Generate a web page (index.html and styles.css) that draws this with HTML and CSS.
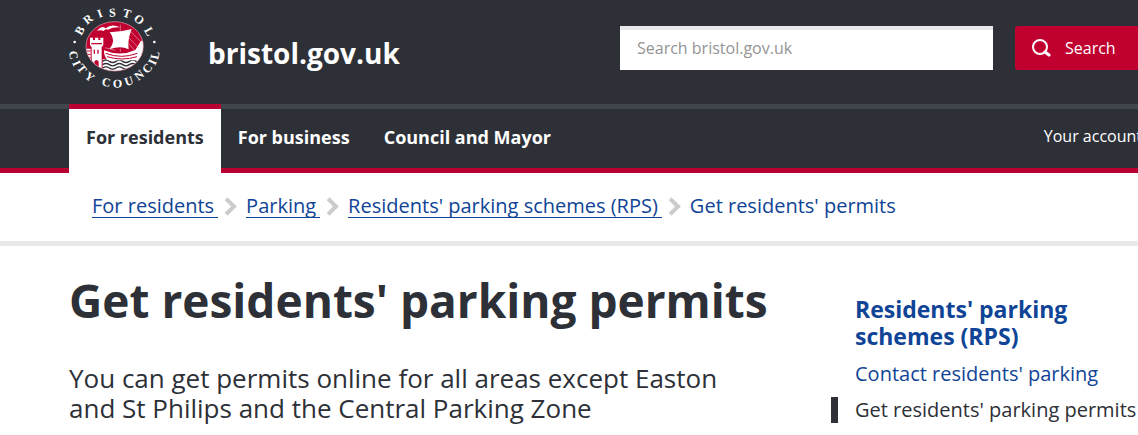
FILE: index.html
```html
<!DOCTYPE html>
<html lang="en">
<head>
  <meta charset="UTF-8">
  <meta name="viewport" content="width=device-width, initial-scale=1.0">
  <title>Get residents' parking permits - bristol.gov.uk</title>
  <link rel="stylesheet" href="styles.css">
</head>
<body>
  <header class="header">
    <div class="container header-inner">
      <a class="brand" href="#">
        <svg class="logo" viewBox="0 0 330 285" role="img" aria-label="Bristol City Council">
          <defs>
            <clipPath id="disc"><ellipse cx="164" cy="139" rx="86" ry="74"/></clipPath>
          </defs>
          <g clip-path="url(#disc)">
            <rect x="70" y="60" width="190" height="160" fill="#c0002f"/>
            <!-- sea -->
            <path d="M128 178H260V220H128z" fill="#fff"/>
            <g fill="none" stroke="#2d3037" stroke-width="4">
              <path d="M128 184q10-7 20 0t20 0 20 0 20 0 20 0 20 0"/>
              <path d="M128 194q10-7 20 0t20 0 20 0 20 0 20 0 20 0"/>
              <path d="M128 204q10-7 20 0t20 0 20 0 20 0 20 0 20 0"/>
            </g>
            <!-- castle -->
            <path d="M70 146H92V210H70z" fill="#fff"/>
            <path d="M70 153h22M70 163h22M70 173h22M70 183h22M70 193h22" stroke="#c0002f" stroke-width="3"/>
            <path d="M90 113h9v7h6v-7h10v7h6v-7h9v22l-5 7v67H95v-67l-5-7z" fill="#fff"/>
            <path d="M94 131h32M103 149v12M114 149v12" stroke="#c0002f" stroke-width="4"/>
            <path d="M103 209v-24q6-10 13 0v24z" fill="#c0002f"/>
            <!-- ship -->
            <path d="M149 97q34-1 66-10-13 34-9 61-24-12-58 0 22-27 1-51z" fill="#fff"/>
            <path d="M132 151q48 20 94-1l17-28h7v46l-14 13H143q-12-13-11-30z" fill="#fff"/>
            <path d="M137 160q47 18 95 0M141 170q46 14 90 0" fill="none" stroke="#c0002f" stroke-width="3"/>
            <path d="M181 74v20M181 146v10M208 90l33 34M205 112l31 32M203 128l22 24M166 151l-31-8" fill="none" stroke="#e6a3b2" stroke-width="2"/>
            <path d="M111 92q13-17 26-7 18-16 43-3-22-1-36 7-8-4-13 4-7-4-20-1z" fill="#fff"/>
          </g>
          <ellipse cx="164" cy="139" rx="86" ry="74" fill="none" stroke="#e6a3b2" stroke-width="2"/>
          <circle cx="44" cy="126" r="4" fill="#fff"/>
          <circle cx="283" cy="126" r="4" fill="#fff"/>
          <text class="logo-text" x="64 81 117 148 186 219 251" y="108 75 54 50 49 59 90" rotate="-60 -38 -20 -3 16 38 60">BRISTOL</text>
          <text class="logo-text" x="26 36 49 71 100 124 159 198 235 263 285 294" y="155 188 204 232 245 256 263 259 243 223 197 180" rotate="78 66 52 38 20 12 -2 -18 -38 -52 -65 -78">CITY COUNCIL</text>
        </svg>
        <span class="site-name">bristol.gov.uk</span>
      </a>
      <form class="search">
        <input class="search-input" type="search" aria-label="Search bristol.gov.uk" placeholder="Search bristol.gov.uk">
        <button class="search-button" type="submit">
          <svg class="search-icon" viewBox="0 0 20 18" aria-hidden="true">
            <circle cx="9" cy="8" r="7" fill="none" stroke="#fff" stroke-width="2"/>
            <path d="M14 13l4 3" stroke="#fff" stroke-width="3" stroke-linecap="round"/>
          </svg>
          Search
        </button>
      </form>
    </div>
  </header>

  <nav class="nav">
    <div class="container nav-inner">
      <a class="nav-link active" href="#">For residents</a>
      <a class="nav-link" href="#">For business</a>
      <a class="nav-link" href="#">Council and Mayor</a>
      <a class="account" href="#">Your account</a>
    </div>
  </nav>

  <nav class="breadcrumb" aria-label="Breadcrumb">
    <ol class="crumbs">
      <li><a href="#">For residents</a></li>
      <li><a href="#">Parking</a></li>
      <li><a href="#">Residents' parking schemes (RPS)</a></li>
      <li>Get residents' permits</li>
    </ol>
  </nav>

  <div class="container page">
    <main class="content">
      <h1>Get residents' parking permits</h1>
      <p class="intro">You can get permits online for all areas except Easton and St Philips and the Central Parking Zone</p>
    </main>
    <aside class="sidebar">
      <h2><a href="#">Residents' parking schemes (RPS)</a></h2>
      <ul>
        <li><a href="#">Contact residents' parking</a></li>
        <li class="current">Get residents' parking permits</li>
      </ul>
    </aside>
  </div>
</body>
</html>
```

FILE: styles.css
```css
*,
*::before {
  box-sizing: border-box;
}
body {
  margin: 0;
  font-family: "Open Sans", "Noto Sans", sans-serif;
  color: #2d3037;
  background: #fff;
  overflow: hidden;
}
a {
  color: #0f4496;
  text-decoration: none;
}
.container {
  margin-left: 69px;
  margin-right: -10px;
}

.header {
  background: #2d3037;
  border-bottom: 5px solid #41454c;
}
.header-inner {
  display: flex;
  align-items: flex-start;
  justify-content: space-between;
  height: 104px;
}
.brand {
  display: flex;
  align-items: flex-start;
  gap: 38px;
  margin-left: -9px;
}
.logo {
  width: 110px;
  height: 95px;
}
.logo-text {
  font-family: "Liberation Serif", serif;
  font-size: 36px;
  font-weight: bold;
  fill: #fff;
}
.site-name {
  padding-top: 33px;
  font-size: 28px;
  line-height: 40px;
  font-weight: 700;
  color: #fff;
}
.search {
  display: flex;
  gap: 22px;
  padding-top: 26px;
}
.search-input {
  width: 373px;
  height: 44px;
  padding: 0 17px 4px;
  border: 0;
  border-top: 4px solid #e9e9e9;
  border-radius: 0;
  background: #fff;
  font-family: inherit;
  font-size: 16px;
  appearance: none;
}
.search-input::placeholder {
  color: #949494;
}
.search-button {
  display: flex;
  align-items: center;
  gap: 14px;
  width: 133px;
  height: 44px;
  padding: 0 16px;
  border: 0;
  border-radius: 3px;
  background: #c0002f;
  color: #fff;
  font-family: inherit;
  font-size: 16px;
  cursor: pointer;
}
.search-icon {
  width: 20px;
  height: 18px;
}

.nav {
  background: #2d3037;
  border-bottom: 5px solid #b80032;
}
.nav-inner {
  display: flex;
  height: 59px;
}
.nav-link {
  padding: 0 17px;
  font-size: 18px;
  font-weight: 700;
  line-height: 56px;
  color: #fff;
}
.nav-link.active {
  margin: -5px 0;
  border-top: 5px solid #b80032;
  background: #fff;
  color: #2d3037;
}
.account {
  margin-left: auto;
  padding-right: 6px;
  font-size: 16px;
  line-height: 54px;
  color: #fff;
}

.breadcrumb {
  padding: 18px 92px 20px;
  border-bottom: 5px solid #e9e9e9;
}
.crumbs {
  display: flex;
  margin: 0;
  padding: 0;
  list-style: none;
  font-size: 20px;
  line-height: 30px;
  color: #0f4496;
}
.crumbs li {
  display: flex;
  align-items: center;
}
.crumbs a {
  padding-right: 4px;
  border-bottom: 1px solid #0f4496;
  line-height: 22px;
}
.crumbs li + li::before {
  content: "";
  width: 13px;
  height: 13px;
  margin: 0 12px 0 3px;
  border-top: 4px solid #ccc;
  border-right: 4px solid #ccc;
  transform: rotate(45deg);
}

.page {
  display: flex;
  justify-content: space-between;
  padding-top: 24px;
}
.content {
  width: 720px;
}
h1 {
  margin: 0 0 33px;
  font-size: 46px;
  line-height: 60px;
}
.intro {
  width: 660px;
  margin: 0;
  font-size: 26px;
  line-height: 30px;
}
.sidebar {
  width: 317px;
  padding-top: 26px;
}
.sidebar h2 {
  width: 240px;
  margin: 0 0 11px 24px;
  font-size: 23px;
  line-height: 27px;
}
.sidebar ul {
  margin: 0;
  padding: 0;
  list-style: none;
  font-size: 20px;
  line-height: 26px;
}
.sidebar li {
  margin-bottom: 10px;
  padding-left: 24px;
}
.sidebar .current {
  padding-left: 17px;
  border-left: 7px solid #2d3037;
}
```
